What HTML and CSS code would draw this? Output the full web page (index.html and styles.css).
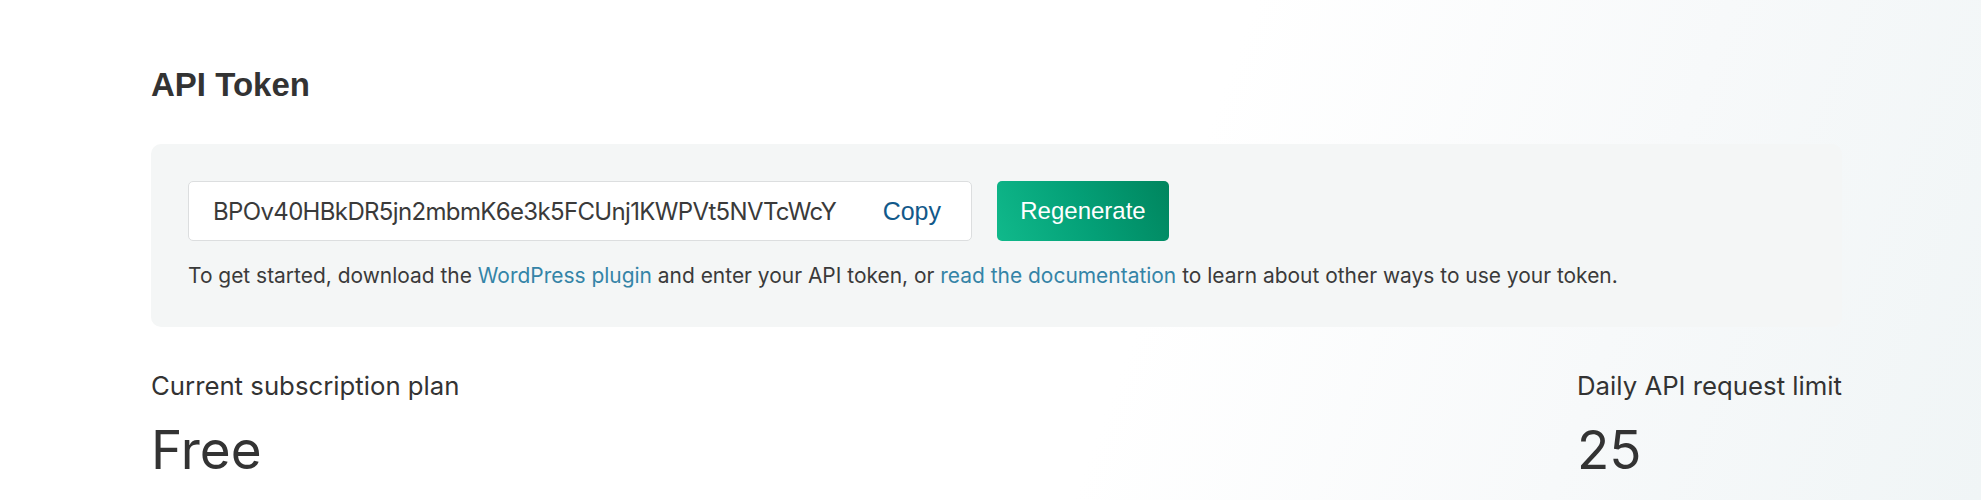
FILE: index.html
```html
<!DOCTYPE html>
<html lang="en">
<head>
<meta charset="utf-8">
<title>API Token</title>
<link rel="stylesheet" href="styles.css">
</head>
<body>
<main class="page">
  <h1 class="title">API Token</h1>
  <section class="panel">
    <div class="token-row">
      <div class="token-field">
        <span class="token-value">BPOv40HBkDR5jn2mbmK6e3k5FCUnj1KWPVt5NVTcWcY</span>
        <button class="copy-btn" type="button">Copy</button>
      </div>
      <button class="regen-btn" type="button">Regenerate</button>
    </div>
    <p class="help">To get started, download the <a href="#" class="link">WordPress plugin</a> and enter your API token, or <a href="#" class="link">read the documentation</a> to learn about other ways to use your token.</p>
  </section>
  <section class="stats">
    <div class="stat">
      <div class="stat-label">Current subscription plan</div>
      <div class="stat-value">Free</div>
    </div>
    <div class="stat">
      <div class="stat-label">Daily API request limit</div>
      <div class="stat-value">25</div>
    </div>
  </section>
</main>
</body>
</html>
```

FILE: styles.css
```css
html, body {
  margin: 0;
  padding: 0;
}

body {
  min-height: 500px;
  background: linear-gradient(110deg, #ffffff 0%, #ffffff 58%, #f7f9fa 80%, #f0f5f6 100%);
  font-family: Inter, "Liberation Sans", sans-serif;
  color: #333333;
  overflow: hidden;
}

.page {
  width: 1691px;
  padding: 66px 0 0 151px;
}

.title {
  margin: 0 0 40px 0;
  font-family: "Liberation Sans", Arial, sans-serif;
  font-weight: 700;
  font-size: 33px;
  line-height: 38px;
  color: #333333;
}

.panel {
  background: #f4f6f6;
  border-radius: 10px;
  padding: 37px 36px 36px 37px;
}

.token-row {
  display: flex;
  align-items: center;
  gap: 25px;
}

.token-field {
  width: 784px;
  height: 60px;
  box-sizing: border-box;
  display: flex;
  align-items: center;
  justify-content: space-between;
  background: #ffffff;
  border: 1px solid #dcdedf;
  border-radius: 5px;
  padding: 0 30px 0 24px;
}

.token-value {
  font-family: Inter, sans-serif;
  font-size: 24px;
  color: #3a3a3a;
  letter-spacing: -0.65px;
  white-space: nowrap;
}

.copy-btn {
  border: 0;
  background: transparent;
  padding: 0;
  font-family: "Liberation Sans", Arial, sans-serif;
  font-size: 25px;
  color: #12598a;
  cursor: pointer;
}

.regen-btn {
  width: 172px;
  height: 60px;
  border: 0;
  border-radius: 5px;
  background: linear-gradient(65deg, #10b98b 0%, #04a077 50%, #00855e 100%);
  color: #ffffff;
  font-family: "Liberation Sans", Arial, sans-serif;
  font-size: 24px;
  cursor: pointer;
}

.help {
  margin: 20px 0 0 0;
  font-size: 20.95px;
  line-height: 30px;
  color: #3a3a3a;
}

.link {
  color: #3484a7;
  text-decoration: none;
}

.stats {
  display: flex;
  justify-content: space-between;
  margin-top: 40px;
}

.stat-label {
  font-size: 25.75px;
  line-height: 37px;
  color: #333333;
}

.stat-value {
  margin-top: 14px;
  font-size: 53px;
  line-height: 64px;
  color: #333333;
}
```
